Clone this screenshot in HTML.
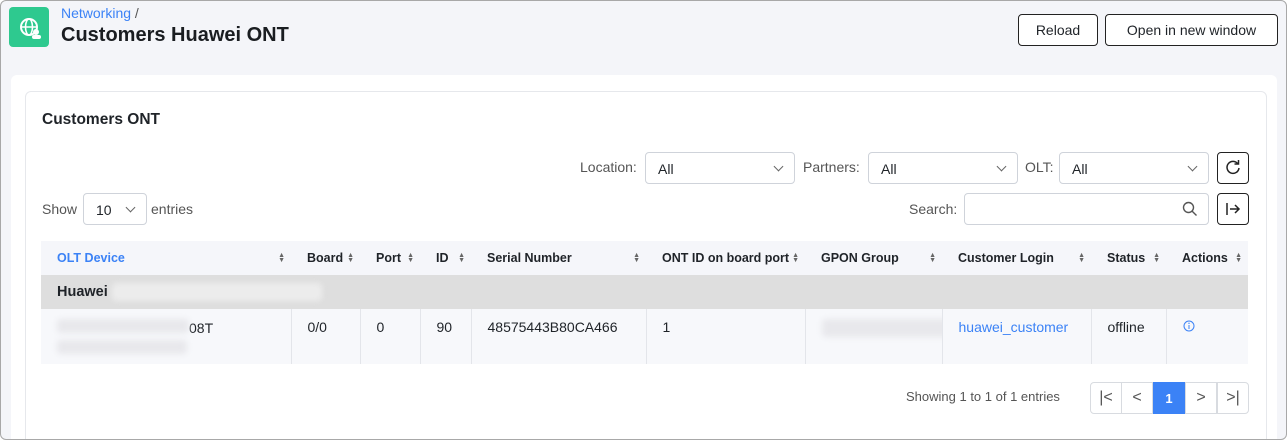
<!DOCTYPE html>
<html><head><meta charset="utf-8"><style>
*{box-sizing:border-box;margin:0;padding:0}
body{width:1287px;height:440px;overflow:hidden;background:#fff;font-family:"Liberation Sans",Arial,sans-serif;color:#1f2328;position:relative}
.frame{position:absolute;left:0;top:0;width:1287px;height:440px;border:1px solid #a8a8a8;border-radius:6px;background:#f4f5f9;overflow:hidden}
.a{position:absolute}
.btn{position:absolute;border:1px solid #222;border-radius:4px;background:#fff;font-size:14px;display:flex;align-items:center;justify-content:center;height:32px;top:13px}
.sel{position:absolute;height:32px;border:1px solid #cfd3da;border-radius:4px;background:#fff;font-size:14px;padding:8px 12px}
.dd:after{content:"";position:absolute;right:12px;top:10px;width:6px;height:6px;border-right:1px solid #666;border-bottom:1px solid #666;transform:rotate(45deg)}
.lbl{position:absolute;font-size:14px;color:#555}
table{position:absolute;left:40px;top:240px;width:1207px;border-collapse:collapse;font-size:14px;table-layout:fixed}
th{height:34px;background:#f5f6fa;font-size:12.5px;font-weight:bold;text-align:left;padding:0 8px 0 16px;position:relative;white-space:nowrap;overflow:hidden}
th .s{position:absolute;right:6px;top:12px;font-size:7px;color:#666;line-height:5px}
td{vertical-align:top;padding:10px 16px 0;border-left:1px solid #e3e5ea;background:#f7f8fb;height:55px;white-space:nowrap;overflow:hidden}
td:first-child{border-left:none}
.blur{display:inline-block;background:#e8e8ec;filter:blur(3px);border-radius:4px}
.pg{position:absolute;top:381px;height:32px;width:32px;border:1px solid #d8dbe0;background:#fff;display:flex;align-items:center;justify-content:center;font-size:16px;color:#555}
</style></head><body><div class="frame">
<div class="a" style="left:8px;top:6px;width:40px;height:40px;background:#2ec98f;border-radius:4px">
<svg width="40" height="40" viewBox="0 0 40 40"><circle cx="20" cy="20" r="8" fill="none" stroke="#fff" stroke-width="2"/><ellipse cx="20" cy="20" rx="3.5" ry="8" fill="none" stroke="#fff" stroke-width="1.6"/><line x1="12" y1="20" x2="28" y2="20" stroke="#fff" stroke-width="1.6"/><circle cx="27" cy="25" r="3" fill="#fff"/><rect x="23" y="28" width="9" height="4" rx="2" fill="#fff"/></svg></div>
<div class="a" style="left:60px;top:4px;font-size:14px;color:#3b82f6">Networking <span style="color:#555">/</span></div>
<div class="a" style="left:60px;top:23px;font-size:20px;font-weight:bold;color:#1a1d21">Customers Huawei ONT</div>
<div class="btn" style="left:1017px;width:80px">Reload</div>
<div class="btn" style="left:1104px;width:173px">Open in new window</div>
<div class="a" style="left:10px;top:74px;width:1266px;height:380px;background:#fff;border-radius:6px"></div>
<div class="a" style="left:24px;top:90px;width:1242px;height:360px;background:#fff;border:1px solid #e6e8ec;border-radius:6px"></div>
<div class="a" style="left:41px;top:110px;font-size:15.5px;font-weight:bold">Customers ONT</div>
<div class="lbl" style="left:579px;top:158px">Location:</div>
<div class="sel dd" style="left:644px;top:151px;width:150px">All</div>
<div class="lbl" style="left:802px;top:158px">Partners:</div>
<div class="sel dd" style="left:867px;top:151px;width:150px">All</div>
<div class="lbl" style="left:1024px;top:158px">OLT:</div>
<div class="sel dd" style="left:1058px;top:151px;width:150px">All</div>
<div class="a" style="left:1216px;top:151px;width:32px;height:32px;border:1px solid #222;border-radius:4px;display:flex;align-items:center;justify-content:center"><svg width="18" height="18" viewBox="0 0 18 18"><path d="M14 5A6 6 0 1 0 15 9" fill="none" stroke="#222" stroke-width="1.5"/><path d="M10.5 5H14.5V1" fill="none" stroke="#222" stroke-width="1.5"/></svg></div>
<div class="lbl" style="left:41px;top:200px">Show</div>
<div class="sel dd" style="left:82px;top:192px;width:64px">10</div>
<div class="lbl" style="left:150px;top:200px">entries</div>
<div class="lbl" style="left:908px;top:200px">Search:</div>
<div class="sel" style="left:963px;top:192px;width:245px"><svg class="a" style="right:10px;top:7px" width="16" height="16" viewBox="0 0 16 16"><circle cx="6.5" cy="6.5" r="5" fill="none" stroke="#555" stroke-width="1.4"/><line x1="10.2" y1="10.2" x2="14.5" y2="14.5" stroke="#555" stroke-width="1.4"/></svg></div>
<div class="a" style="left:1216px;top:192px;width:32px;height:32px;border:1px solid #222;border-radius:4px;display:flex;align-items:center;justify-content:center"><svg width="18" height="18" viewBox="0 0 18 18"><path d="M3 3V15M6 9H15M11 5L15 9L11 13" fill="none" stroke="#222" stroke-width="1.5"/></svg></div>
<table>
<colgroup><col style="width:250px"><col style="width:69px"><col style="width:60px"><col style="width:51px"><col style="width:175px"><col style="width:159px"><col style="width:137px"><col style="width:149px"><col style="width:75px"><col style="width:82px"></colgroup>
<tr><th style="color:#3b82f6">OLT Device<span class="s">▲<br>▼</span></th><th>Board<span class="s">▲<br>▼</span></th><th>Port<span class="s">▲<br>▼</span></th><th>ID<span class="s">▲<br>▼</span></th><th>Serial Number<span class="s">▲<br>▼</span></th><th>ONT ID on board port<span class="s">▲<br>▼</span></th><th>GPON Group<span class="s">▲<br>▼</span></th><th>Customer Login<span class="s">▲<br>▼</span></th><th>Status<span class="s">▲<br>▼</span></th><th>Actions<span class="s">▲<br>▼</span></th></tr>
<tr><td colspan="10" style="background:#dedede;height:34px;padding:8px 16px;font-weight:bold;font-size:14.5px;border:none">Huawei <span class="blur" style="width:210px;height:18px;vertical-align:middle;background:#ececec"></span></td></tr>
<tr><td><span class="blur" style="width:132px;height:14px"></span>08T<br><span class="blur" style="width:130px;height:14px;margin-top:4px"></span></td><td>0/0</td><td>0</td><td>90</td><td>48575443B80CA466</td><td>1</td><td><span class="blur" style="width:130px;height:18px"></span></td><td style="color:#3b82f6">huawei_customer</td><td>offline</td><td><svg width="12" height="12" viewBox="0 0 12 12"><circle cx="6" cy="6" r="5" fill="none" stroke="#3b82f6" stroke-width="1"/><line x1="6" y1="5" x2="6" y2="9" stroke="#3b82f6"/><circle cx="6" cy="3.3" r=".7" fill="#3b82f6"/></svg></td></tr>
</table>
<div class="lbl" style="left:905px;top:388px;font-size:13px">Showing 1 to 1 of 1 entries</div>
<div class="pg" style="left:1089px;border-radius:4px 0 0 4px">|&lt;</div>
<div class="pg" style="left:1120px">&lt;</div>
<div class="pg" style="left:1152px;background:#3b82f6;border-color:#3b82f6;color:#fff;font-size:13px;font-weight:bold">1</div>
<div class="pg" style="left:1184px">&gt;</div>
<div class="pg" style="left:1216px;border-radius:0 4px 4px 0">&gt;|</div>
</div></body></html>
